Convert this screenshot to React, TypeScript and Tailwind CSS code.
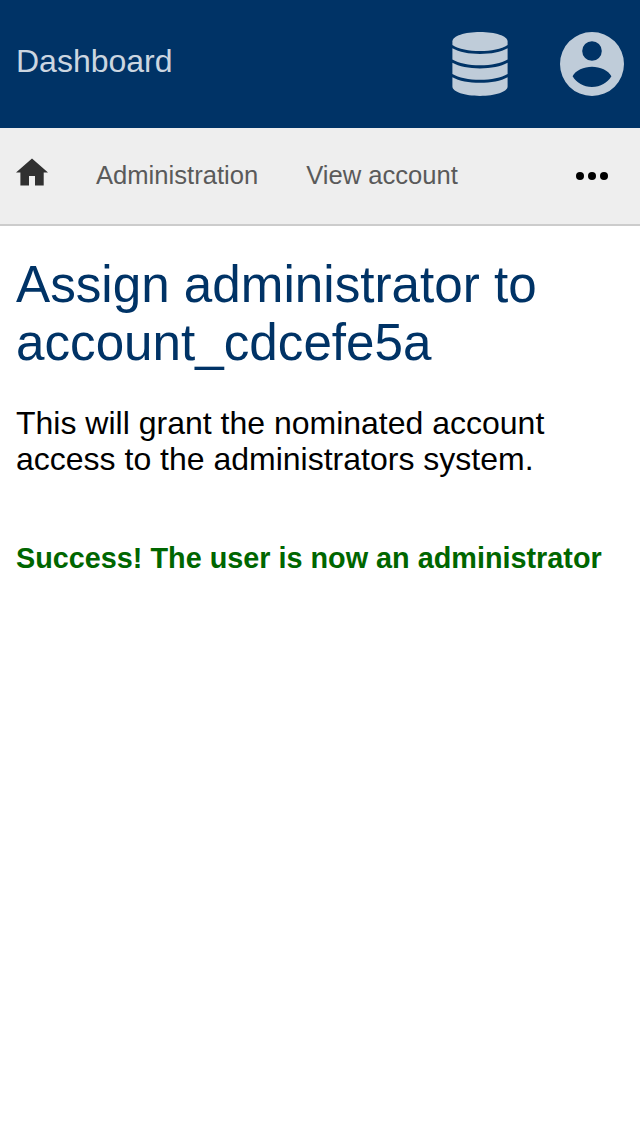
export default function App() {
  return (
    <div className="min-h-[1136px] bg-white font-['Liberation_Sans',Arial,sans-serif] text-black">
      <header className="flex h-32 items-center justify-between bg-[#003366] px-4">
        <span className="pb-1.5 text-[32px] leading-10 text-[#ccd6e0]">Dashboard</span>
        <div className="flex items-center gap-[52px] text-[#bfccd9]">
          <svg className="h-16 w-14" viewBox="0 0 56 64" fill="currentColor" aria-hidden="true">
            <path d="M28 0C43.2 0 55.6 4 55.6 9.4V12.9C49.5 17 39 18.9 28 18.9S6.5 17 .4 12.9V9.4C.4 4 12.8 0 28 0z" />
            <path d="M.4 16.2C7 20 17 21.9 28 21.9S49 20 55.6 16.2V27.5C49.5 31.4 39 33.3 28 33.3S6.5 31.4 .4 27.5z" />
            <path d="M.4 30.8C7 34.5 17 36.4 28 36.4S49 34.5 55.6 30.8V42C49.5 45.9 39 47.8 28 47.8S6.5 45.9 .4 42z" />
            <path d="M.4 45.2C7 48.9 17 50.8 28 50.8S49 48.9 55.6 45.2V54.6C55.6 60 43.2 64 28 64S.4 60 .4 54.6z" />
          </svg>
          <svg className="h-16 w-16" viewBox="0 0 64 64" fill="currentColor" fillRule="evenodd" aria-hidden="true">
            <path d="M32 0a32 32 0 1 1 0 64 32 32 0 0 1 0-64zM32 9.2a9.8 9.8 0 1 0 0 19.6 9.8 9.8 0 0 0 0-19.6zM12.6 44.3C15.4 38.2 24 34.7 32 34.7S48.6 38.2 51.4 44.3C47.2 51 40.6 55 32 55S16.8 51 12.6 44.3z" />
          </svg>
        </div>
      </header>
      <nav className="flex h-[98px] items-center border-b-2 border-[#cccccc] bg-[#eeeeee] px-4 text-[25.6px] leading-8 text-[#5a5a5a]">
        <svg className="mb-2 h-7 w-8" viewBox="0 0 32 28" fill="#303030" aria-hidden="true">
          <path d="M16 .4 32 14.4H27.7V27.6H19V18H13V27.6H4.4V14.4H0z" />
        </svg>
        <span className="mb-0.5 ml-12">Administration</span>
        <span className="mb-0.5 ml-12">View account</span>
        <svg className="mr-4 ml-auto h-2 w-8" viewBox="0 0 32 8" fill="black" aria-hidden="true">
          <circle cx="4" cy="4" r="4" />
          <circle cx="16" cy="4" r="4" />
          <circle cx="28" cy="4" r="4" />
        </svg>
      </nav>
      <main className="px-4 pt-[30px]">
        <h1 className="text-[51.2px] leading-[58px] text-[#003366]">
          Assign administrator to
          <br />
          account_cdcefe5a
        </h1>
        <p className="mt-[33px] text-[32px] leading-9">
          This will grant the nominated account
          <br />
          access to the administrators system.
        </p>
        <p className="mt-[65px] text-[28.8px] leading-8 font-bold text-[#006600]">
          Success! The user is now an administrator
        </p>
      </main>
    </div>
  );
}
